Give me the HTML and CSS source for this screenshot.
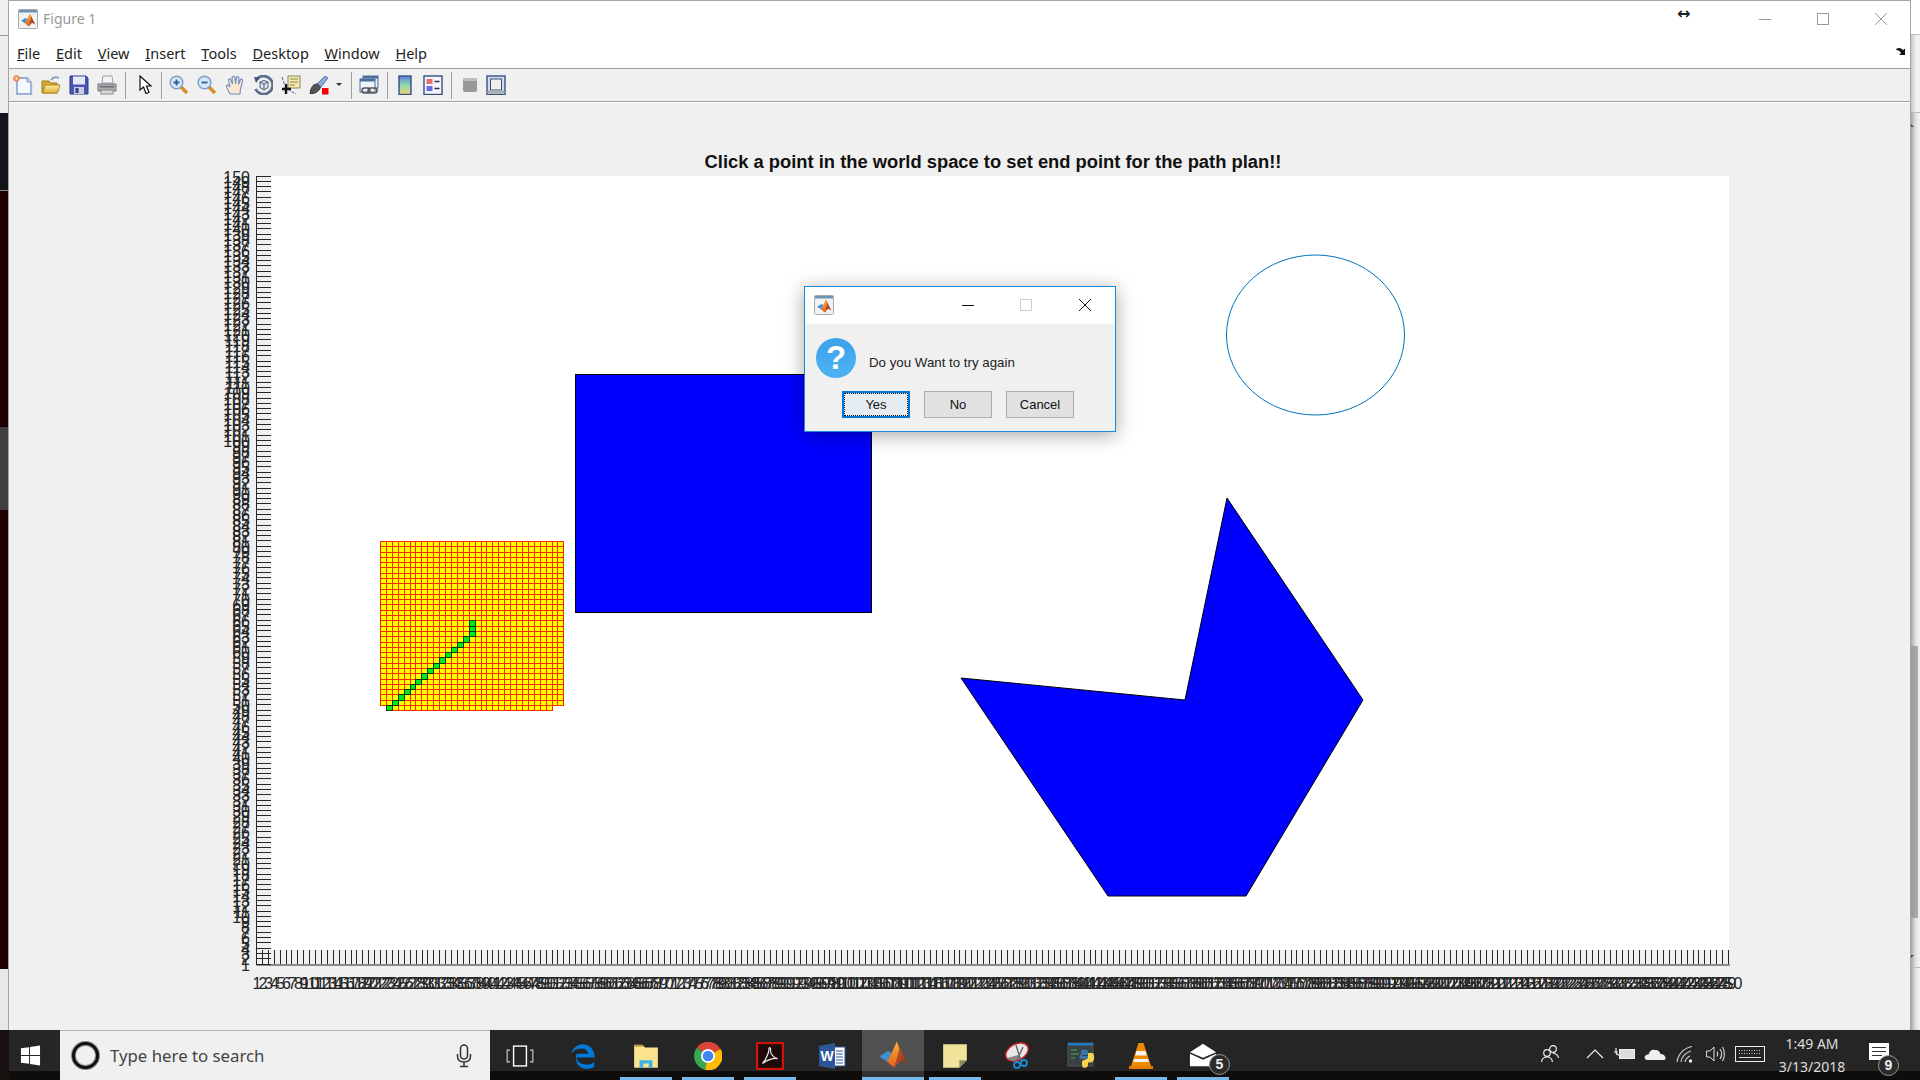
FILE: index.html
```html
<!DOCTYPE html>
<html lang="en">
<head>
<meta charset="utf-8">
<title>Figure 1</title>
<link rel="stylesheet" href="styles.css">
</head>
<body>
<svg class="defs" width="0" height="0" aria-hidden="true">
  <defs>
    <linearGradient id="mlOrange" x1="0" y1="0" x2="0" y2="1"><stop offset="0" stop-color="#f9b233"/><stop offset="1" stop-color="#e2611c"/></linearGradient>
    <linearGradient id="mlRed" x1="0" y1="0" x2="1" y2="1"><stop offset="0" stop-color="#d9662a"/><stop offset="1" stop-color="#8f2a17"/></linearGradient>
    <linearGradient id="cbar" x1="0" y1="0" x2="0" y2="1"><stop offset="0" stop-color="#5b7fe0"/><stop offset=".5" stop-color="#8fd8b0"/><stop offset="1" stop-color="#f6d27a"/></linearGradient>
    <linearGradient id="folder" x1="0" y1="0" x2="0" y2="1"><stop offset="0" stop-color="#fdeaa0"/><stop offset="1" stop-color="#e2b13c"/></linearGradient>
    <symbol id="ml" viewBox="0 0 24 24">
      <path fill="#3f8fd4" d="M1 14 8 9.5 11 11 7 18Z"/>
      <path fill="url(#mlOrange)" d="M7 18 11 11 15 2 17.500 8 13 23Z"/>
      <path fill="url(#mlRed)" d="M15 2 23.500 20 18.500 17 13 23 17 8Z"/>
    </symbol>
    <symbol id="app" viewBox="0 0 20 20">
      <rect x=".5" y=".5" width="19" height="19" rx="1" fill="#f2f2f2" stroke="#a9a9a9"/>
      <rect x="1" y="1" width="18" height="2.500" fill="#6f93b5"/>
      <use href="#ml" x="2" y="3" width="16" height="15"/>
    </symbol>
  </defs>
</svg>

<div class="screen">
  <div class="desktop">
    <div class="edge-left">
      <div class="band band-top"></div>
      <div class="band band-navy"></div>
      <div class="band band-maroon1"></div>
      <div class="band band-gray"></div>
      <div class="band band-maroon2"></div>
      <div class="band band-foot"></div>
    </div>

    <main class="figure">
      <header class="titlebar">
        <svg class="app-icon"><use href="#app"/></svg>
        <span class="title-text">Figure 1</span>
        <div class="win-controls">
          <svg class="wc" viewBox="0 0 12 12"><path d="M0 6.500H12" stroke="#999" fill="none"/></svg>
          <svg class="wc" viewBox="0 0 12 12"><rect x=".5" y=".5" width="11" height="11" stroke="#999" fill="none"/></svg>
          <svg class="wc" viewBox="0 0 12 12"><path d="M0 0 12 12M12 0 0 12" stroke="#999" fill="none"/></svg>
        </div>
      </header>
      <nav class="menubar">
        <span class="menu"><u>F</u>ile</span>
        <span class="menu"><u>E</u>dit</span>
        <span class="menu"><u>V</u>iew</span>
        <span class="menu"><u>I</u>nsert</span>
        <span class="menu"><u>T</u>ools</span>
        <span class="menu"><u>D</u>esktop</span>
        <span class="menu"><u>W</u>indow</span>
        <span class="menu"><u>H</u>elp</span>
      </nav>
      <div class="toolbar">
        <span class="tool"><svg class="ico" viewBox="0 0 20 20"><path d="M4 3H14L18 7V19H4Z" fill="#f4f9ff" stroke="#7f97c4" stroke-width="1.400"/><path d="M14 3V7H18" fill="#c9d8f0" stroke="#7f97c4"/><path d="M18.500 9V19.500H6" stroke="#9fb3d8" stroke-width="1.500" fill="none"/><circle cx="3.500" cy="3.500" r="2.800" fill="#f2a24a" stroke="#e9704a"/><circle cx="3.500" cy="3.500" r="1" fill="#fff"/></svg></span>
        <span class="tool"><svg class="ico" viewBox="0 0 20 20"><path d="M1 6H8L9.500 8H16V18H1Z" fill="#d9a92e" stroke="#a07a1a"/><path d="M2 18 4 10H19L16.500 18Z" fill="url(#folder)" stroke="#b08a24"/><path d="M10 5C12 2 15 1.500 18 3" stroke="#7f9cc9" stroke-width="1.500" fill="none"/></svg></span>
        <span class="tool"><svg class="ico" viewBox="0 0 20 20"><path d="M1 1H17L19 3V19H1Z" fill="#4b55b5" stroke="#2e3a8a"/><rect x="4" y="1.500" width="12" height="8" fill="#e4e8f7"/><rect x="5" y="12" width="10" height="7" fill="#c9cde0"/><rect x="6.500" y="13" width="3" height="5" fill="#3a3f80"/></svg></span>
        <span class="tool"><svg class="ico" viewBox="0 0 20 20"><path d="M6 1H15L16 8H5Z" fill="#f4f4f4" stroke="#9aa0a8"/><path d="M1 9H19V16H1Z" fill="#a9abae" stroke="#77797c"/><rect x="4" y="15" width="12" height="4" fill="#d9d9d9" stroke="#8a8a8a"/><rect x="3" y="11" width="14" height="1.500" fill="#6b6d70"/></svg></span>
        <span class="sep"></span>
        <span class="tool tool-arrow"><svg class="ico" viewBox="0 0 20 20"><path d="M5 1V15L8.500 12 11 18.500 14 17.500 11.500 11H16Z" fill="#fff" stroke="#111" stroke-width="1.200"/></svg></span>
        <span class="sep sep-tight"></span>
        <span class="tool"><svg class="ico" viewBox="0 0 20 20"><path d="M11 11 18 18" stroke="#d88f2a" stroke-width="3.500"/><circle cx="7.500" cy="7.500" r="6.300" fill="#d6e8f7" stroke="#7d9cc8" stroke-width="1.400"/><path d="M4.500 7.500H10.500M7.500 4.500V10.500" stroke="#2f5c9c" stroke-width="1.800"/></svg></span>
        <span class="tool"><svg class="ico" viewBox="0 0 20 20"><path d="M11 11 18 18" stroke="#d88f2a" stroke-width="3.500"/><circle cx="7.500" cy="7.500" r="6.300" fill="#d6e8f7" stroke="#7d9cc8" stroke-width="1.400"/><path d="M4.500 7.500H10.500" stroke="#2f5c9c" stroke-width="1.800"/></svg></span>
        <span class="tool"><svg class="ico" viewBox="0 0 20 20"><path d="M5 19C3 15 1 12 1.500 10.500 2.500 9.500 4 10.500 5 12L3.500 5C3.500 3.500 5.500 3.500 6 5L7.500 9 7 2.500C7.500 1 9.500 1 10 2.500L10.500 9 11.500 2.500C12 1.200 14 1.500 14 3L13.500 9.500 15.500 4.500C16.500 3.500 18 4.500 17.500 6L15.500 14 15 19Z" fill="#fbe6cf" stroke="#6e8fc4" stroke-width="1.100"/></svg></span>
        <span class="tool"><svg class="ico" viewBox="0 0 20 20"><path d="M4 4A9 9 0 1 1 2.500 14" fill="none" stroke="#5a6f8c" stroke-width="2.800"/><path d="M1 2 7 2.500 3 8Z" fill="#44597a"/><path d="M7 7 11 5.500 15 7V12.500L11 15 7 12.500Z" fill="#dfe6ee" stroke="#44597a"/><path d="M7 7 11 9 15 7M11 9V15" stroke="#44597a" fill="none"/></svg></span>
        <span class="tool"><svg class="ico" viewBox="0 0 20 20"><path d="M1 2 3 8 8 15 15 19" fill="none" stroke="#3a54c8" stroke-dasharray="3 1.500"/><rect x="7" y="1" width="12" height="12" fill="#f2e8b0" stroke="#8a8a5a"/><path d="M9 4H17M9 7H17M9 10H14" stroke="#8a8a5a"/><path d="M5 9V19M1 14H10" stroke="#111" stroke-width="2.400"/></svg></span>
        <span class="tool"><svg class="ico" viewBox="0 0 20 20"><path d="M8 9 16 1 19 3 12 12Z" fill="#8fa8d8" stroke="#5d78b0"/><path d="M8 9C4 9 3 12 2 14L1 18.500C5 19 10 17 11.500 12Z" fill="#555" stroke="#333"/><rect x="13" y="13" width="6.500" height="6.500" fill="#f40000"/></svg></span>
        <span class="caret"></span>
        <span class="sep"></span>
        <span class="tool"><svg class="ico" viewBox="0 0 20 20"><rect x="4" y="1" width="15" height="12" fill="#e4edf7" stroke="#4d6c9c"/><rect x="4" y="1" width="15" height="2.500" fill="#4d6c9c"/><rect x="1" y="4" width="15" height="13" fill="#eef4fb" stroke="#4d6c9c"/><rect x="1" y="4" width="15" height="2.500" fill="#4d6c9c"/><rect x="3" y="13" width="8" height="5" rx="2.500" fill="none" stroke="#555" stroke-width="1.500"/><rect x="9" y="13" width="9" height="5" rx="2.500" fill="none" stroke="#555" stroke-width="1.500"/></svg></span>
        <span class="sep"></span>
        <span class="tool"><svg class="ico" viewBox="0 0 20 20"><rect x="4" y="1" width="12" height="18.500" fill="url(#cbar)" stroke="#33507f" stroke-width="1.400"/></svg></span>
        <span class="tool"><svg class="ico" viewBox="0 0 20 20"><rect x="1" y="1" width="18" height="18.500" fill="#f4f6fb" stroke="#33507f" stroke-width="1.400"/><rect x="3.500" y="4" width="6" height="5" fill="#e86a6a"/><rect x="3.500" y="11" width="6" height="5" fill="#6a6ae8"/><path d="M11.500 6.500H16.500M11.500 13.500H16.500" stroke="#333" stroke-width="1.500"/></svg></span>
        <span class="sep"></span>
        <span class="tool tool-narrow tool-hide"><svg class="ico" viewBox="0 0 20 20"><rect x="3" y="3" width="14" height="14" rx="2" fill="#999"/><rect x="3" y="3" width="14" height="3" rx="1" fill="#bdbdbd"/></svg></span>
        <span class="tool tool-narrow"><svg class="ico" viewBox="0 0 20 20"><rect x="1" y="1" width="18" height="18.500" fill="#d5dbe6" stroke="#33507f" stroke-width="1.400"/><rect x="4.500" y="4" width="11" height="11" fill="#f0f0f0" stroke="#33507f"/><rect x="1.500" y="15.500" width="17" height="3" fill="#b0b0b0"/></svg></span>
      </div>

      <div class="canvas">
        <svg class="plot" viewBox="9 102 1902 928" width="1902" height="928">
          <rect class="plot-bg" x="271" y="176" width="1458" height="774"/>
          <text class="plot-title" x="993" y="168">Click a point in the world space to set end point for the path plan!!</text>
          <g id="ticks"></g>
          <g id="cells"></g>
          <rect class="shape" x="575.500" y="374.500" width="296" height="238"/>
          <polygon class="shape" points="1227,498 1363,700 1246,896 1108,896 961,678 1185,700"/>
          <ellipse class="ring" cx="1315.500" cy="335" rx="89" ry="80"/>
        </svg>
      </div>
    </main>

    <div class="edge-right">
      <div class="er-top"></div>
      <div class="er-mid"></div>
      <div class="er-rest">
        <span class="er-arrow er-arrow-up"></span>
        <div class="er-thumb"></div>
        <span class="er-arrow er-arrow-down"></span>
        <div class="er-foot"></div>
      </div>
    </div>
  </div>

  <footer class="taskbar">
    <div class="tb-gutter"></div>
    <div class="tb-start"><svg class="win" viewBox="0 0 22 22"><path fill="#fff" d="M1 3.500 9.500 2.300V10.500H1ZM10.500 2.100 21 .6V10.500H10.500ZM1 11.500H9.500V19.700L1 18.500ZM10.500 11.500H21V21.400L10.500 19.900Z"/></svg></div>
    <div class="tb-search">
      <span class="cortana"></span>
      <span class="search-text">Type here to search</span>
      <svg class="mic" viewBox="0 0 16 24"><rect x="4.500" y="1" width="7" height="14" rx="3.500" fill="none" stroke="#333" stroke-width="1.500"/><path d="M1.500 10V12C1.500 16 4 18 8 18S14.500 16 14.500 12V10M8 18V22M4 22.500H12" fill="none" stroke="#333" stroke-width="1.500"/></svg>
    </div>
    <div class="task task-view"><svg class="t-ico t-view" viewBox="0 0 24 24"><rect x="6.500" y="3.500" width="11" height="17" fill="none" stroke="#fff" stroke-width="1.200"/><path d="M3.500 7H1V17H3.500M20.500 7H23V17H20.500" fill="none" stroke="#ccc"/></svg></div>
    <div class="task"><svg class="t-ico" viewBox="0 0 26 26"><path d="M6 14.500H23C23 7 18.500 2 12 2 6.500 2 2.500 5.500 1 11 3.500 7.500 7 6 10.500 6 14 6 16.500 8 17 11H6C4 20 9 25 15 25 18 25 20.500 24.200 22.500 23V18.500C20 20.500 17.500 21 15 21 10.500 21 7 19 6 14.500Z" fill="#0078d7"/></svg></div>
    <div class="task active-run"><svg class="t-ico" viewBox="0 0 26 26"><path d="M2 3H10L12 5H24V24H2Z" fill="#fde48f"/><rect x="2" y="2.500" width="8" height="2" fill="#c9a24a"/><path d="M7 24V17H19V24H15.500V20H10.500V24Z" fill="#3fb3e8"/></svg><span class="run"></span></div>
    <div class="task active-run"><svg class="t-ico" viewBox="0 0 28 28"><path d="M14 14 26.500 7A14 14 0 0 0 3 5.500Z" fill="#db4437"/><path d="M14 14 3 5.500A14 14 0 0 0 11 27.700Z" fill="#37a853"/><path d="M14 14 11 27.700A14 14 0 0 0 26.500 7Z" fill="#fbbc05"/><circle cx="14" cy="14" r="7" fill="#fff"/><circle cx="14" cy="14" r="5.300" fill="#4285f4"/></svg><span class="run"></span></div>
    <div class="task active-run"><svg class="t-ico" viewBox="0 0 26 26"><rect x="1" y="1" width="24" height="24" fill="#1d0a08" stroke="#d0140c" stroke-width="2"/><path d="M6 20C9 17 12 10 12 7 12 4 14 5 13.500 8 13 11 17 15 20 15.500 17.500 14.500 11 16 6 20Z" fill="none" stroke="#eee" stroke-width="1.100"/></svg><span class="run"></span></div>
    <div class="task"><svg class="t-ico" viewBox="0 0 28 28"><rect x="12" y="5" width="15" height="19" fill="#fff" stroke="#2b579a"/><path d="M18 9H25M18 12H25M18 15H25M18 18H25M18 21H25" stroke="#2b579a"/><path d="M1 4 17 1V27L1 24Z" fill="#2b579a"/><text class="word-w" x="9" y="18.500">W</text></svg></div>
    <div class="task task-active"><svg class="t-ico t-big" viewBox="0 0 24 24"><use href="#ml"/></svg><span class="run"></span></div>
    <div class="task active-run"><svg class="t-ico" viewBox="0 0 26 26"><path d="M2 2H24V17L17 24H2Z" fill="#f0e49a"/><path d="M24 17H17V24Z" fill="#8c8762"/></svg><span class="run"></span></div>
    <div class="task"><svg class="t-ico" viewBox="0 0 28 28"><ellipse cx="14" cy="10" rx="12" ry="8" transform="rotate(-28 14 10)" fill="#e8e8e8" stroke="#c8242a" stroke-width="1.500"/><path d="M4 16C8 20 14 19 18 16L15 13Z" fill="#888"/><path d="M13 3 18 19M20 5 14 18" stroke="#666" stroke-width="1.400"/><circle cx="14" cy="23" r="3" fill="none" stroke="#1b8ad0" stroke-width="1.800"/><circle cx="21" cy="21" r="3" fill="none" stroke="#1b8ad0" stroke-width="1.800"/></svg></div>
    <div class="task"><svg class="t-ico t-py" viewBox="0 0 28 28"><rect x="1" y="1" width="25" height="23" fill="#3a3f44" stroke="#555"/><rect x="1" y="1" width="25" height="2.500" fill="#1c7cc4"/><path d="M4 8H10M4 12H12M4 16H8" stroke="#3cb34a" stroke-width="1.200"/><path d="M14 8C19 7 21 8 21 10V13H15V14H21V15C21 17 18 17 14 17 12 17 12 13 14 12.500Z" fill="#3a78ac"/><path d="M21 11H25C27 11 27.500 14 27 17 26.500 20 25 20.500 21 20.500V23C21 26.500 15 27 15 23V20C15 17.500 21 18 21 15Z" fill="#f7d44a"/></svg></div>
    <div class="task active-run"><svg class="t-ico" viewBox="0 0 26 28"><path d="M10.500 1H15.500L23 24H3Z" fill="#f08a00"/><path d="M8.500 9H17.500L18.800 13.500H7.200ZM6 17H20L21 20H5Z" fill="#f4f4f4"/><path d="M1 24H25V27H1Z" fill="#e27b00"/></svg><span class="run"></span></div>
    <div class="task active-run task-mail"><svg class="t-ico" viewBox="0 0 30 28"><path d="M1 10 15 1 29 10 15 16Z" fill="#fff"/><path d="M1 11.500 15 18 29 11.500V25H1Z" fill="#fff"/></svg><span class="badge">5</span><span class="run"></span></div>

    <div class="tray">
      <span class="tr tr-people"><svg class="tr-ico" viewBox="0 0 20 20"><circle cx="13" cy="5" r="3.300" fill="none" stroke="#eee" stroke-width="1.200"/><circle cx="7" cy="9" r="3.300" fill="#252525" stroke="#eee" stroke-width="1.200"/><path d="M1.500 18C2 14.500 4 13 7 13S12 14.500 12.500 18M13 9.500C16 9.500 18 11 18.500 14" fill="none" stroke="#eee" stroke-width="1.200"/></svg></span>
      <span class="tr tr-chev"><svg class="tr-ico" viewBox="0 0 20 20"><path d="M2 14 10 6 18 14" fill="none" stroke="#eee" stroke-width="1.200"/></svg></span>
      <span class="tr"><svg class="tr-ico tr-wide" viewBox="0 0 22 14"><rect x="5.500" y="2.500" width="15" height="9" fill="#ddd" stroke="#eee"/><path d="M0 5H4M2 1V5C2 7 3 8 5 8" fill="none" stroke="#eee" stroke-width="1.200"/></svg></span>
      <span class="tr"><svg class="tr-ico tr-wide" viewBox="0 0 22 14"><path d="M4 13C1 13 0 11 1 9 2 7.500 3.500 7.500 4.500 7.500 5.500 4 8 2 11 3 14 2.500 16 4.500 16.500 7 19.500 7 21.500 9 21.500 11 21.500 12 21 13 20 13Z" fill="#eee"/></svg></span>
      <span class="tr"><svg class="tr-ico" viewBox="0 0 20 20"><path d="M2 18C3 10 9 4 17 2.500M6 18C6.500 13 10.500 8.500 16 7M10 18C10.500 15.500 12.500 13 15 12" fill="none" stroke="#ccc" stroke-width="1.200"/><circle cx="15.500" cy="17" r="1.700" fill="#eee"/></svg></span>
      <span class="tr"><svg class="tr-ico" viewBox="0 0 20 20"><path d="M1.500 7H5L9 3V17L5 13H1.500Z" fill="none" stroke="#ddd"/><path d="M12 7.500C13 9 13 11 12 12.500M15 5C17 8 17 12 15 15M17.500 3C20 7 20 13 17.500 17" fill="none" stroke="#ddd" stroke-width="1.100"/></svg></span>
      <span class="tr tr-kbd"><svg class="kbd" viewBox="0 0 30 16"><rect x=".5" y=".5" width="29" height="15" fill="none" stroke="#eee"/><path d="M4 4.500H26M4 7.500H26" stroke="#ccc" stroke-dasharray="1 1.500"/><path d="M4 11.500H26" stroke="#ddd"/></svg></span>
      <span class="clock"><span>1:49 AM</span><span>3/13/2018</span></span>
      <span class="tr tr-notif"><svg class="note" viewBox="0 0 20 17"><path d="M0 0H20V17H0Z" fill="#fff"/><path d="M3 4.500H17M3 8.500H17M3 12.500H13" stroke="#333" stroke-width="1.200"/></svg><span class="badge badge-notif">9</span></span>
    </div>
  </footer>

  <section class="dialog">
    <div class="dlg-title">
      <svg class="dlg-app"><use href="#app"/></svg>
      <svg class="dlg-btn" viewBox="0 0 12 12"><path d="M0 6.500H12" stroke="#111" fill="none"/></svg>
      <svg class="dlg-btn" viewBox="0 0 12 12"><rect x=".5" y=".5" width="11" height="11" stroke="#ccc" fill="none"/></svg>
      <svg class="dlg-btn" viewBox="0 0 12 12"><path d="M0 0 12 12M12 0 0 12" stroke="#111" fill="none"/></svg>
    </div>
    <div class="dlg-body">
      <div class="dlg-msg"><span class="q-icon">?</span><span class="q-text">Do you Want to try again</span></div>
      <div class="dlg-actions">
        <button class="btn btn-focus"><span>Yes</span></button>
        <button class="btn">No</button>
        <button class="btn">Cancel</button>
      </div>
    </div>
  </section>

  <span class="cursor-resize">&#8596;</span>
  <svg class="cursor-corner" viewBox="0 0 12 10"><path d="M0 2C3 0 5 1 7 3L9 1.500V8H3L5 6C4 4 2 3 1 3.500Z" fill="#111"/></svg>
</div>
<script src="plot.js"></script>
</body>
</html>
```
FILE: styles.css
```css
* { box-sizing: border-box; }
html, body { margin: 0; padding: 0; height: 100%; overflow: hidden; }
.defs { display: block; height: 0; }
.screen { position: relative; width: 1920px; height: 1080px; display: flex; flex-direction: column; font-family: "Liberation Sans", Arial, sans-serif; background: #111; }
.desktop { display: flex; height: 1030px; }

.edge-left { width: 8px; display: flex; flex-direction: column; }
.band-top { height: 113px; background: linear-gradient(#f0f0f0 35px, #9a9a9a 35px, #9a9a9a 36px, #ededed 36px); }
.band-navy { height: 77px; background: #12151b; }
.band-maroon1 { height: 237px; background: #1f0000; border-top: 1px solid #8a8a8a; }
.band-gray { height: 83px; background: #3f3f3f; }
.band-maroon2 { height: 459px; background: #1f0000; }
.band-foot { height: 61px; background: #e8e8e8; }

.figure { width: 1903px; display: flex; flex-direction: column; background: #f0f0f0; border-top: 1px solid #a6a6a6; border-left: 1px solid #a6a6a6; border-right: 1px solid #a6a6a6; }
.titlebar { height: 35px; background: #fff; display: flex; align-items: center; padding-left: 9px; }
.app-icon { width: 20px; height: 20px; }
.title-text { margin-left: 5px; font: 14px "Noto Sans", sans-serif; color: #9a9a9a; }
.win-controls { margin-left: auto; display: flex; padding-right: 23px; gap: 46px; }
.wc { width: 12px; height: 12px; }

.menubar { height: 33px; background: #fff; display: flex; align-items: center; padding: 2px 0 0 8px; border-bottom: 1px solid #a0a0a0; }
.menu { font: 14.500px "Noto Sans", sans-serif; color: #222; margin-right: 15.800px; }

.toolbar { height: 33px; flex: none; display: flex; align-items: center; background: #f0f0f0; border-bottom: 1px solid #a0a0a0; box-shadow: 0 1px 0 #fff; position: relative; }
.tool { width: 28px; height: 22px; display: flex; align-items: center; justify-content: center; flex: none; }
.tool-arrow { margin-left: 2px; }
.tool-narrow { width: 26px; }
.tool-hide { margin-left: 2px; }
.ico { width: 20px; height: 20px; }
.sep { width: 1px; height: 27px; background: #9f9f9f; margin: 0 3px 0 4px; flex: none; }
.sep-tight { margin-left: 2px; }
.caret { width: 14px; height: 22px; position: relative; flex: none; }
.caret::after { content: ""; position: absolute; left: 3px; top: 9px; border: 3px solid transparent; border-top-color: #333; border-left-width: 3.500px; border-right-width: 3.500px; }

.canvas { flex: 1; min-height: 0; }
.plot { display: block; }
.plot-bg { fill: #fff; }
.plot-title { font: bold 18.350px "Liberation Sans", Arial, sans-serif; text-anchor: middle; fill: #111; }
.tick { stroke: #262626; stroke-width: 1; fill: none; }
.tl { font: 16px "Liberation Sans", Arial, sans-serif; fill: #262626; }
.tl-x { text-anchor: middle; }
.tl-y { text-anchor: end; }
.shape { fill: #0000ff; stroke: #000; stroke-width: 1; }
.ring { fill: none; stroke: #0072bd; stroke-width: 1; }
.cell { fill: #ffff00; stroke: #ff2a00; stroke-width: 1; }
.cell-path { fill: #00e826; stroke: #0a3a0a; stroke-width: 1; }

.edge-right { width: 9px; display: flex; flex-direction: column; background: #f0f0f0; }
.er-top { height: 35px; background: #fff; border-bottom: 1px solid #bcbcbc; }
.er-mid { height: 78px; background: linear-gradient(90deg, #c4c4c4, #f1f1f1 5px); border-bottom: 1px solid #bcbcbc; }
.er-rest { flex: 1; display: flex; flex-direction: column; background: linear-gradient(90deg, #a8a8a8, #e4e4e4 5px, #f0f0f0 8px); padding-top: 11px; }
.er-arrow { display: block; width: 0; height: 0; border-left: 3px solid #444; }
.er-arrow-up { border-top: 3px solid transparent; height: 3px; margin-bottom: 519px; }
.er-arrow-down { border-bottom: 3px solid transparent; height: 3px; margin-top: 37px; }
.er-thumb { height: 272px; width: 7px; flex: none; background: linear-gradient(90deg, #999, #adadad); }
.er-foot { margin-top: 9px; height: 1px; background: #bcbcbc; }

.taskbar { height: 50px; display: flex; background: linear-gradient(#252525 41px, #0f0c0c 41px); color: #ddd; }
.tb-gutter { width: 9px; background: #17120f; }
.tb-start { width: 51px; height: 41px; display: flex; align-items: center; justify-content: center; padding: 9px 9px 0 0; background: #262626; }
.win { width: 21px; height: 21px; }
.tb-search { width: 430px; display: flex; align-items: center; background: #f0f0f0; border-top: 1px solid #b8b8b8; padding: 0 0 0 12px; }
.cortana { width: 27px; height: 27px; border-radius: 50%; border: 3.500px solid #111; box-shadow: 0 0 0 1px #888, inset 0 0 0 1px #999; background: #f0f0f0; }
.search-text { margin-left: 11px; font: 16.800px "Noto Sans", sans-serif; color: #444; }
.mic { width: 16px; height: 24px; margin-left: auto; margin-right: 18px; }

.task { position: relative; width: 61.900px; height: 50px; flex: none; display: flex; justify-content: center; padding-top: 12px; }
.task-view { width: 63px; }
.t-view { margin-right: 3px; }
.t-py { margin-left: 3px; }
.task-active { background: linear-gradient(#505050 41px, #333 41px); }
.t-ico { width: 28px; height: 28px; }
.t-big { width: 32px; height: 30px; margin-top: -3px; }
.run { position: absolute; left: 5px; right: 5px; bottom: 0; height: 3px; background: #76b9ed; }
.task-active .run { left: 0; right: 0; }
.word-w { font: bold 14px "Liberation Sans", Arial, sans-serif; fill: #fff; text-anchor: middle; }
.badge { position: absolute; left: 37px; top: 24px; width: 21px; height: 21px; border-radius: 50%; background: #2b2b2b; border: 1px solid #999; color: #eee; font: bold 14px/19px "Liberation Sans", Arial, sans-serif; text-align: center; }

.tray { margin-left: auto; display: flex; height: 41px; align-items: center; padding-right: 16px; }
.tr { position: relative; width: 30px; height: 41px; display: flex; align-items: center; justify-content: center; flex: none; padding-top: 6px; }
.tr-people { width: 40px; margin-right: 10px; }
.tr-kbd { width: 40px; }
.tr-notif { width: 50px; }
.tr-ico { width: 20px; height: 20px; }
.tr-wide { width: 22px; height: 14px; }
.kbd { width: 30px; height: 16px; }
.note { width: 20px; height: 17px; margin-top: -5px; margin-left: -1px; }
.badge-notif { left: 24px; top: 25px; }
.clock { width: 84px; display: flex; flex-direction: column; align-items: center; font: 14px/23px "Noto Sans", sans-serif; color: #ddd; padding-top: 9px; }

.dialog { position: absolute; left: 804px; top: 286px; width: 312px; height: 146px; display: flex; flex-direction: column; border: 1px solid #1e88d8; background: #f0f0f0; box-shadow: 0 3px 18px rgba(0,0,0,.35); }
.dlg-title { height: 37px; flex: none; background: #fff; display: flex; align-items: center; padding: 0 0 2px 9px; }
.dlg-app { width: 20px; height: 20px; }
.dlg-btn { width: 12px; height: 12px; margin-left: 46px; }
.dlg-btn:nth-of-type(2) { margin-left: 128px; }
.dlg-btn:nth-of-type(4) { margin-left: 47px; }
.dlg-body { flex: 1; padding: 14px 0 0 11px; }
.dlg-msg { display: flex; align-items: center; height: 40px; }
.q-icon { width: 40px; height: 40px; border-radius: 50%; background: linear-gradient(#3aa2ec, #50b2f3); color: #fff; font: bold 33px/40px "Liberation Sans", Arial, sans-serif; text-align: center; }
.q-text { margin-left: 13px; padding-top: 8px; font-size: 13.300px; color: #222; }
.dlg-actions { display: flex; gap: 14px; margin: 13px 0 0 26px; }
.btn { width: 68px; height: 27px; padding: 0; background: #e1e1e1; border: 1px solid #adadad; font: 13px "Liberation Sans", Arial, sans-serif; color: #111; }
.btn-focus { border-color: #0078d7; border-width: 2px; background: #e5edf3; }
.btn-focus span { display: block; margin: 0; height: 23px; line-height: 21px; border: 1px dotted #111; }

.cursor-resize { position: absolute; left: 1677px; top: 4px; font: bold 16px "DejaVu Sans", sans-serif; color: #222; }
.cursor-corner { position: absolute; left: 1896px; top: 47px; width: 12px; height: 10px; }
```
FILE: plot.js
```js
(function () {
  var NS = 'http://www.w3.org/2000/svg';
  var ticks = document.getElementById('ticks');
  var cells = document.getElementById('cells');
  var X0 = 257, X1 = 1729, Y0 = 964, Y1 = 176;
  var XN = 250, YN = 150;

  function el(name, attrs, parent, text) {
    var node = document.createElementNS(NS, name);
    for (var k in attrs) node.setAttribute(k, attrs[k]);
    if (text !== undefined) node.textContent = text;
    parent.appendChild(node);
    return node;
  }
  function px(v) { return Math.round(v) - 0.5; }

  var d = 'M' + px(X0) + ' ' + Y1 + 'V' + (Y0 + 1) + 'H' + (X1 + 1);
  var i, v;
  for (i = 1; i <= XN; i++) {
    v = X0 + (i - 1) * (X1 - X0) / (XN - 1);
    d += 'M' + px(v) + ' ' + (Y0 - 14) + 'V' + Y0;
    el('text', { 'class': 'tl tl-x', x: v.toFixed(2), y: 989 }, ticks, String(i));
  }
  for (i = 1; i <= YN; i++) {
    v = Y0 - (i - 1) * (Y0 - Y1) / (YN - 1);
    d += 'M' + X0 + ' ' + px(v + 0.5) + 'H271';
    el('text', { 'class': 'tl tl-y', x: 250, y: (v + 6.5).toFixed(2) }, ticks, String(i));
  }
  el('path', { 'class': 'tick', d: d }, ticks);

  var SX = 5.915, SY = 5.29, GX = 380, GY = 541;
  function cx(c) { return Math.round(GX + c * SX) + 0.5; }
  function cy(r) { return Math.round(GY + r * SY) + 0.5; }
  function cell(c, r, cls) {
    el('rect', { 'class': cls, x: cx(c), y: cy(r), width: cx(c + 1) - cx(c), height: cy(r + 1) - cy(r) }, cells);
  }
  var r, c;
  for (r = 0; r < 31; r++) {
    for (c = 0; c < 31; c++) cell(c, r, 'cell');
  }
  for (c = 1; c < 29; c++) cell(c, 31, 'cell');
  var steps = [[1,31],[2,30],[3,29],[4,28],[5,27],[6,26],[7,25],[8,24],[9,23],[10,22],[11,21],[12,20],[13,19],[14,18],[15,17],[15,16],[15,15]];
  steps.forEach(function (p) { cell(p[0], p[1], 'cell-path'); });
}());
```
